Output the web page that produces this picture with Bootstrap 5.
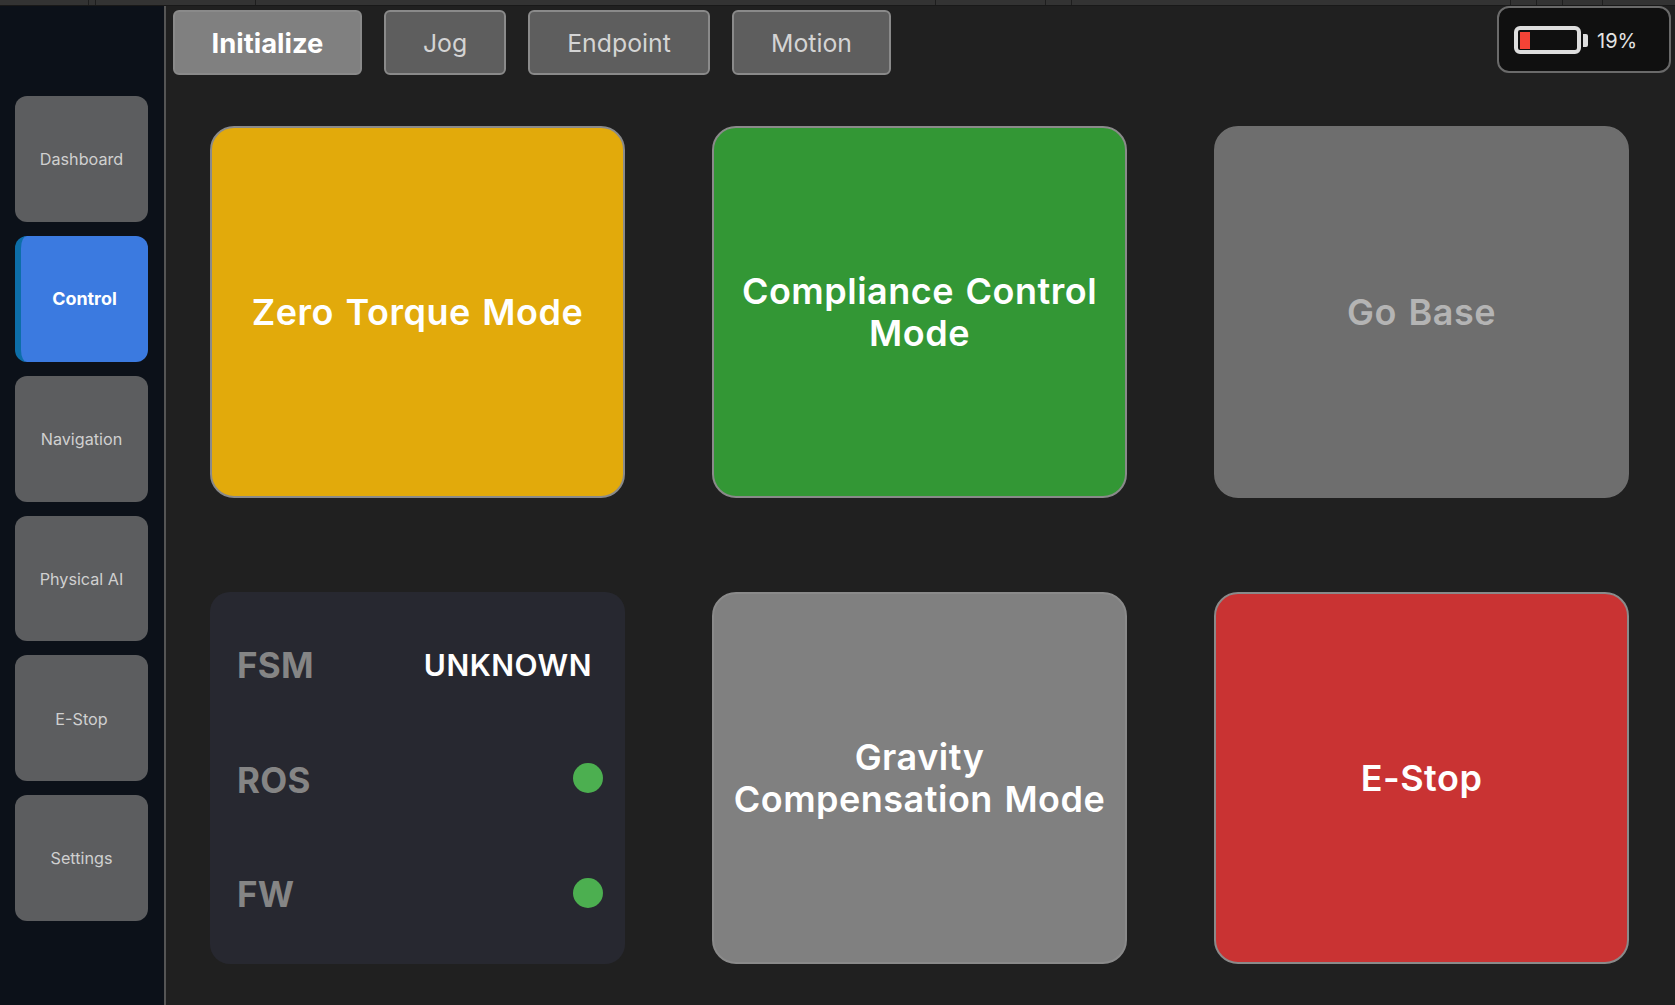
<!DOCTYPE html>
<html lang="en"><head><meta charset="utf-8"><title>Control</title>
<link href="https://cdn.jsdelivr.net/npm/bootstrap@5.3.0/dist/css/bootstrap.min.css" rel="stylesheet">
<style>
html,body{height:100%;margin:0}
body{background:#202020;font-family:Inter,"Liberation Sans",sans-serif;overflow:hidden;height:1005px}
.strip{height:6px;background:#333;border-bottom:1px solid #191919;flex:none}
.seg{height:100%;border-right:1px solid #1e1e1e;flex:none}
.s1{width:89px}.s2{width:7px}.s3{width:160px}.s4{width:680px}.s5{width:110px}.s6{width:26px}.s7{width:439px}.s8{width:26px}.s9{width:26px}.s10{width:40px}
.side{width:166px;flex:none;background:#0c1119;border-right:2px solid #555;padding:90px 16px 0 15px;gap:14px}
.side-btn{height:125.85px;background:#5c5d5f;color:#d0d0d0;border:0;border-radius:12px;font-size:16.2px;padding:1px 0 0;width:100%;flex:none}
.side-btn.on{background:#3b7ae0;color:#fff;font-weight:700;font-size:17.9px;padding-top:1px;border-left:6px solid #0d6ea8}
.tabs{padding:4px 4px 0 7px;height:66px}
.tab{height:65px;border:2px solid #8a8a8a;border-radius:6px;background:#5e5e5e;color:#d4d4d4;font-size:24.8px;padding:2px 0 0;margin-right:22px;flex:none}
.tab.on{background:#808080;color:#fff;font-weight:700;font-size:27.4px}
.t1{width:189px}.t2{width:122px}.t3{width:182px}.t4{width:159px}
.bat{width:174px;height:67px;border:2px solid #6a6a6a;border-radius:12px;background:#101010;color:#e4e4e4;font-size:20px;margin-top:-4px;padding-left:15px;gap:9px}
.bat svg{margin-top:1px}
.bat span{padding-top:2px}
.grid-main{display:grid;grid-template-columns:repeat(3,415px);grid-template-rows:372px 372px;column-gap:87px;row-gap:94px;padding:54px 0 0 44px}
.big{border:2px solid #8a8a8a;border-radius:24px;color:#fff;font-size:36px;font-weight:600;line-height:42px;padding:0 16px;letter-spacing:.5px;word-spacing:2px}
.yellow{background:#e2aa0b}.green{background:#339735}.dis{background:#6e6e6e;color:#b4b4b4;border-color:#6e6e6e}.grey{background:#808080}.red{background:#c93333}
.status{background:#272830;border-radius:20px;padding:16px 22px 13px 27px;font-weight:600}
.status-row{flex:1 1 0}
.lab{color:#858585;font-size:35px;font-weight:700;letter-spacing:.3px;padding-top:1px}
.val{color:#fff;font-size:30px;padding-right:11px;letter-spacing:.5px}
.dot{width:30px;height:30px;border-radius:50%;background:#4caf50;margin-top:-2px}
</style></head><body class="d-flex flex-column">
<div class="strip d-flex">
<div class="seg s1"></div><div class="seg s2"></div>
<div class="seg s3"></div><div class="seg s4"></div>
<div class="seg s5"></div><div class="seg s6"></div>
<div class="seg s7"></div><div class="seg s8"></div>
<div class="seg s9"></div><div class="seg s10"></div>
</div>
<div class="d-flex flex-grow-1">
<nav class="side d-flex flex-column">
<button class="side-btn">Dashboard</button>
<button class="side-btn on">Control</button>
<button class="side-btn">Navigation</button>
<button class="side-btn">Physical AI</button>
<button class="side-btn">E-Stop</button>
<button class="side-btn">Settings</button>
</nav>
<main class="flex-grow-1 d-flex flex-column">
<div class="tabs d-flex align-items-start">
<button class="tab on t1">Initialize</button>
<button class="tab t2">Jog</button>
<button class="tab t3">Endpoint</button>
<button class="tab t4">Motion</button>
<div class="bat d-flex align-items-center ms-auto">
<svg width="74" height="28" viewBox="0 0 74 28"><rect x="2" y="2" width="63" height="24" rx="4" fill="#101010" stroke="#dedede" stroke-width="4"/><rect x="6" y="6" width="10" height="17" fill="#f44336"/><path d="M69 8h3a2 2 0 0 1 2 2v9a2 2 0 0 1-2 2h-3z" fill="#dedede"/></svg>
<span>19%</span>
</div>
</div>
<div class="grid-main">
<button class="big yellow">Zero Torque Mode</button>
<button class="big green">Compliance Control Mode</button>
<button class="big dis">Go Base</button>
<div class="status d-flex flex-column">
<div class="status-row d-flex justify-content-between align-items-center"><span class="lab">FSM</span><span class="val">UNKNOWN</span></div>
<div class="status-row d-flex justify-content-between align-items-center"><span class="lab">ROS</span><span class="dot"></span></div>
<div class="status-row d-flex justify-content-between align-items-center"><span class="lab">FW</span><span class="dot"></span></div>
</div>
<button class="big grey">Gravity Compensation Mode</button>
<button class="big red">E-Stop</button>
</div>
</main>
</div>
<script src="https://cdn.jsdelivr.net/npm/bootstrap@5.3.0/dist/js/bootstrap.bundle.min.js"></script>
</body></html>
